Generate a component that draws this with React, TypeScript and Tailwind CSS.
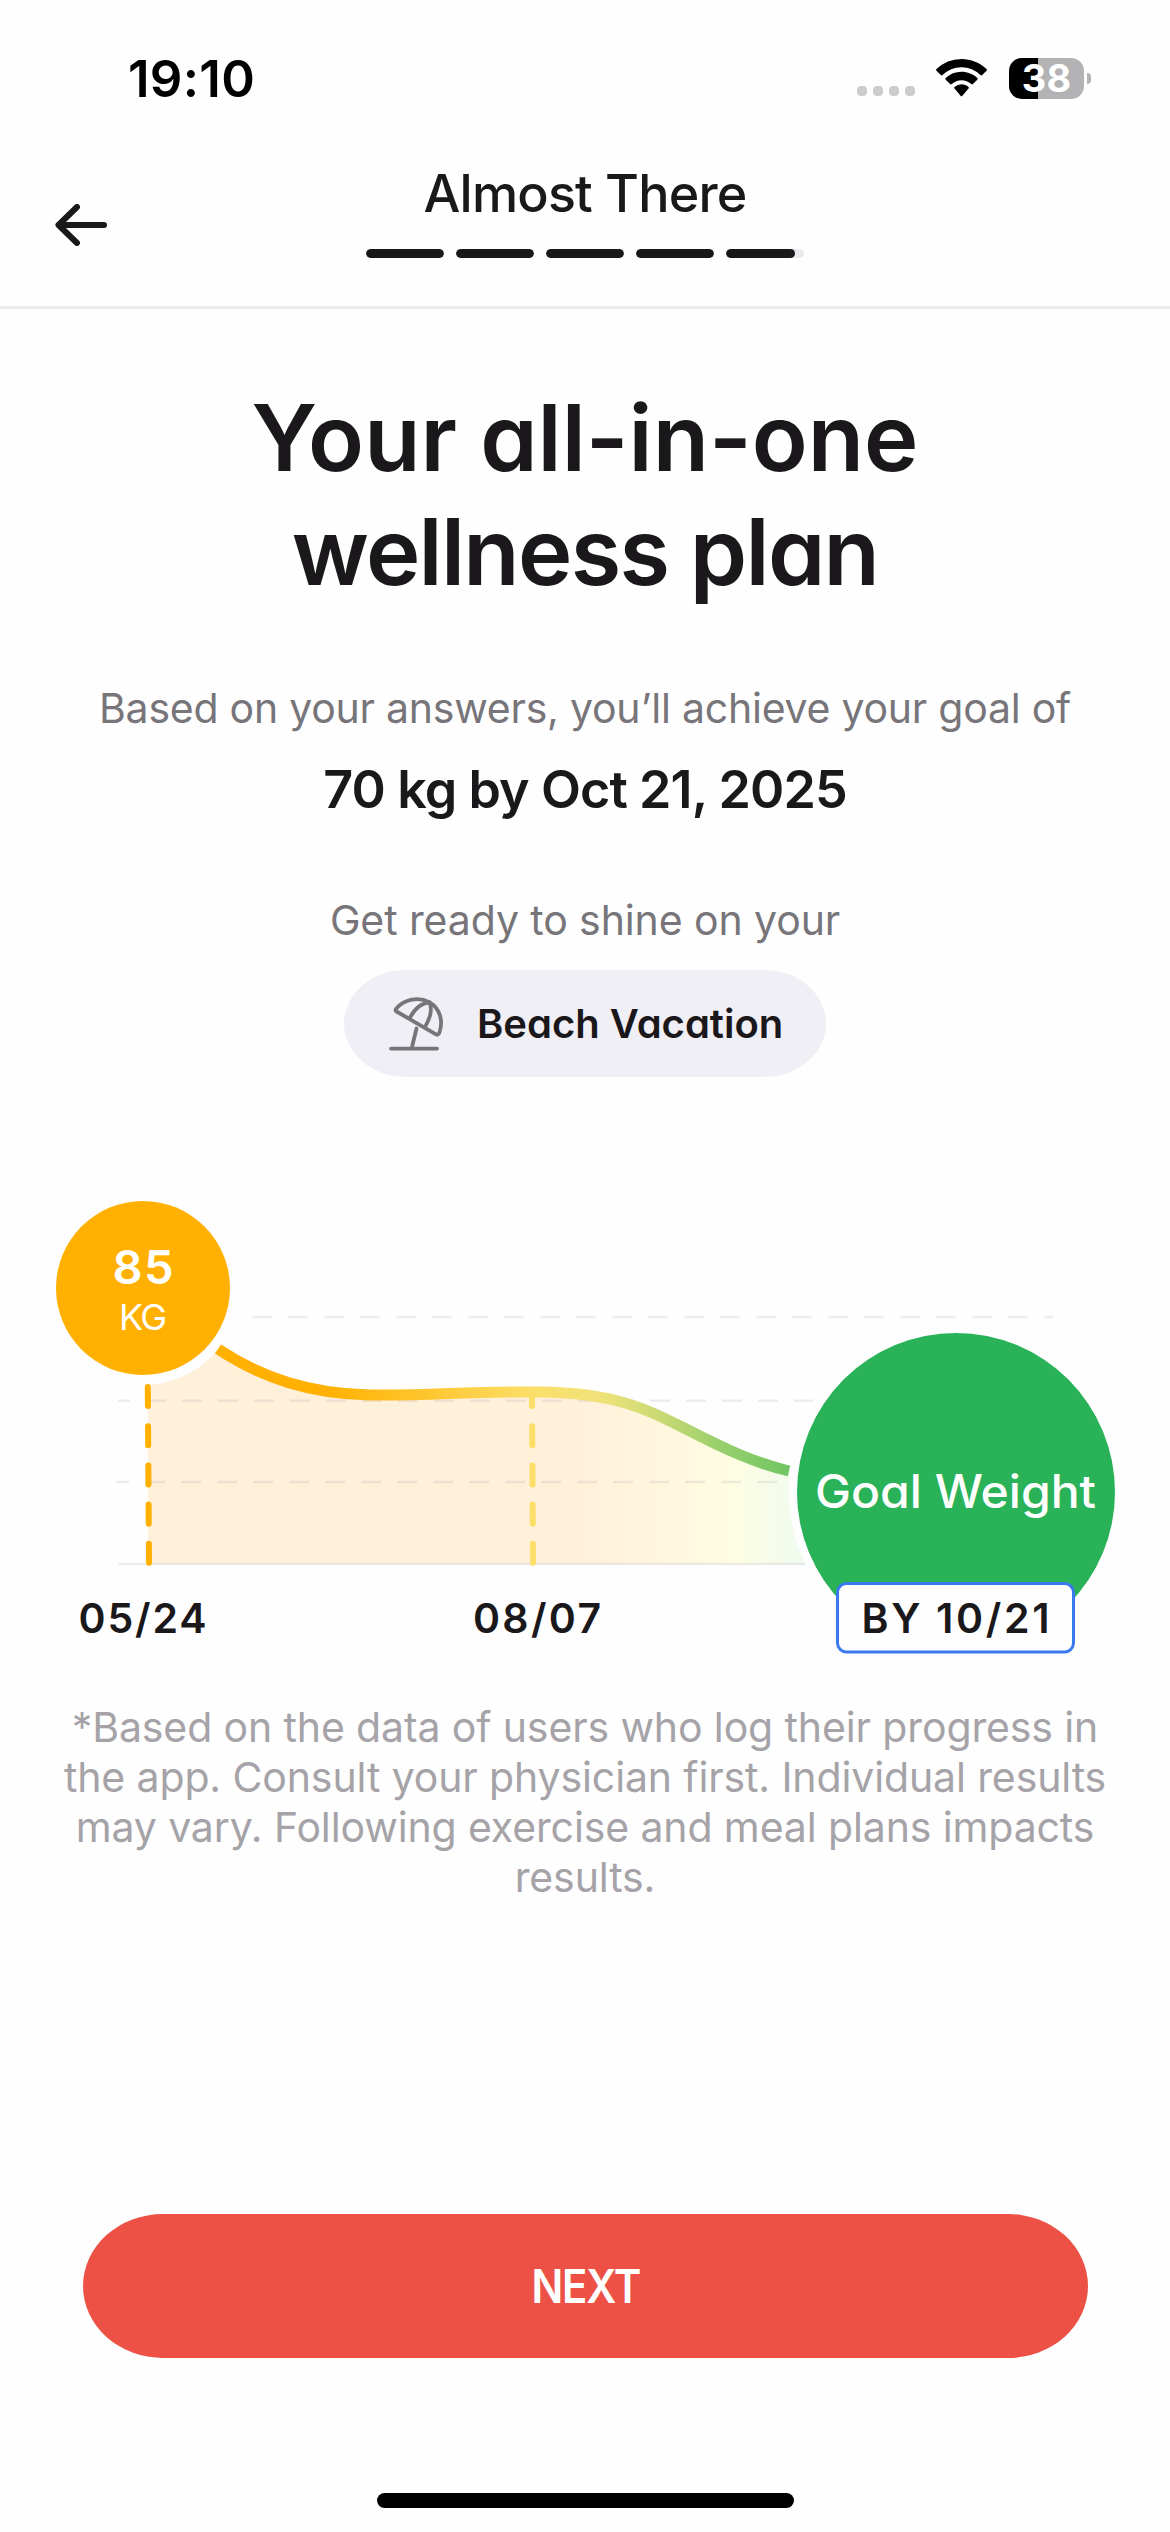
import type { ReactNode } from 'react'

const PROGRESS_STEPS = [100, 100, 100, 100, 89]

const FOOTNOTE_LINES = [
  '*Based on the data of users who log their progress in',
  'the app. Consult your physician first. Individual results',
  'may vary. Following exercise and meal plans impacts',
  'results.',
]

export default function App() {
  return (
    <main className="flex h-[2532px] w-[1170px] flex-col overflow-hidden bg-[#fefefe] font-['Inter',sans-serif] text-[#1a181b]">
      <StatusBar />
      <Header />
      <PlanSummary />
      <WeightChart />
      <Footnote />
      <button
        type="button"
        className="mr-[82px] ml-[83px] mt-[312px] h-36 shrink-0 rounded-[80px/72px] bg-[#ed5145] text-[46px] font-semibold tracking-[-1.2px] text-white"
      >
        <span className="inline-block scale-x-[0.91]">NEXT</span>
      </button>
      <div className="mx-auto mt-[135px] h-[15px] w-[417px] shrink-0 rounded-full bg-black" />
    </main>
  )
}

function StatusBar() {
  return (
    <div className="flex h-[156px] shrink-0 items-center justify-between pr-[79px] pl-[128px] text-black">
      <span className="text-[51px] leading-none font-semibold tracking-[0.3px]">
        19:10
      </span>
      <div className="flex items-center">
        <div className="mt-[26px] mr-[21px] flex gap-1.5">
          {[0, 1, 2, 3].map((dot) => (
            <span key={dot} className="size-2.5 rounded-[4px] bg-[#cdcbce]" />
          ))}
        </div>
        <WifiIcon />
        <div className="ml-[22px] flex h-[41px] w-[75px] items-center justify-center rounded-[13px] bg-[linear-gradient(to_right,#000_29px,#b3b2b4_29px)]">
          <span className="text-[38px] leading-none font-bold text-white">
            38
          </span>
        </div>
        <span className="ml-[3px] h-[11px] w-1 rounded-r-full bg-[#b3b2b4]" />
      </div>
    </div>
  )
}

function WifiIcon() {
  return (
    <svg viewBox="0 0 51 38" className="h-[38px] w-[51px]" fill="currentColor">
      <path d="M25.500 0C35 0 43.900 3.700 50.500 10.100a1.200 1.200 0 0 1 0 1.700l-4.300 4.300a1.200 1.200 0 0 1-1.700 0A27.600 27.600 0 0 0 25.500 8.200 27.600 27.600 0 0 0 6.500 16.100a1.200 1.200 0 0 1-1.700 0L.5 11.800a1.200 1.200 0 0 1 0-1.700A36 36 0 0 1 25.500 0Z" />
      <path d="M25.500 12.800c6 0 11.600 2.300 15.800 6.200.5.500.5 1.200 0 1.700l-4.400 4.400a1.200 1.200 0 0 1-1.700 0 14.300 14.300 0 0 0-19.400 0 1.200 1.200 0 0 1-1.700 0l-4.400-4.400a1.200 1.200 0 0 1 0-1.700 23.200 23.200 0 0 1 15.800-6.200Z" />
      <path d="M25.500 25.300c2.700 0 5.100 1 7 2.600.5.500.5 1.200 0 1.700l-6.100 7.200a1.200 1.200 0 0 1-1.800 0l-6.100-7.200a1.200 1.200 0 0 1 0-1.700 10.700 10.700 0 0 1 7-2.600Z" />
    </svg>
  )
}

function Header() {
  return (
    <header className="grid h-[153px] shrink-0 grid-cols-[1fr_438px_1fr] border-b-[3px] border-[#ebe9ed]">
      <svg
        viewBox="0 0 52 42"
        className="mt-12 ml-[55px] h-[42px] w-[52px]"
        fill="none"
        stroke="currentColor"
        strokeWidth="6"
        strokeLinecap="round"
        strokeLinejoin="round"
      >
        <path d="M22 3 3.500 21 22 39M4 21h45" />
      </svg>
      <div className="pt-3 text-center">
        <Display className="text-[52px] leading-[52px] font-medium tracking-[-0.8px]">
          Almost There
        </Display>
        <div className="mt-[29px] flex gap-3">
          {PROGRESS_STEPS.map((value, index) => (
            <div
              key={index}
              className="h-[9px] w-[78px] overflow-hidden rounded-full bg-[#ebe9ed]"
            >
              <div
                className="h-full rounded-full bg-[#1a181b]"
                style={{ width: `${value}%` }}
              />
            </div>
          ))}
        </div>
      </div>
    </header>
  )
}

function PlanSummary() {
  return (
    <section className="flex flex-col items-center pt-[72px] text-center whitespace-nowrap">
      <h1>
        <Display className="text-[92px] leading-[114px] font-semibold">
          Your all-in-one
        </Display>
        <Display className="text-[92px] leading-[114px] font-semibold tracking-[-1.7px]">
          wellness plan
        </Display>
      </h1>
      <p className="mt-[74px] text-[41px] leading-[50px] tracking-[-0.24px] text-[#77757a]">
        Based on your answers, you’ll achieve your goal of
      </p>
      <Display className="mt-[27px] text-[52px] leading-[60px] font-semibold tracking-[-0.9px]">
        70 kg by Oct 21, 2025
      </Display>
      <p className="mt-[75px] text-[41px] leading-[50px] tracking-[-0.1px] text-[#77757a]">
        Get ready to shine on your
      </p>
      <div className="mt-[25px] flex h-[107px] w-[482px] items-center rounded-[62px/54px] bg-[#f1eff6] pl-11">
        <BeachIcon />
        <Display className="ml-[31px] text-[40px] leading-none font-semibold">
          Beach Vacation
        </Display>
      </div>
    </section>
  )
}

function BeachIcon() {
  return (
    <svg
      viewBox="58 46 58 56"
      className="h-14 w-[58px]"
      fill="none"
      stroke="#77757a"
      strokeWidth="3.800"
      strokeLinecap="round"
      strokeLinejoin="round"
    >
      <path d="M66.500 61.500 106 84.300c1.500.8 2.600.3 3.200-1.200 4.500-12 .8-24.600-9.600-30.800-11.500-6.200-25.500-3-33.500 6.500-.9 1.100-.8 2 .4 2.700Z" />
      <path d="M80 67.500c4.500-8.500 11.500-14.500 19.500-15.200M95.500 76c5-8.500 6.500-17.500 4-23.700" />
      <path d="M86.500 78.500 82 97M61 98.600h46" />
    </svg>
  )
}

function WeightChart() {
  return (
    <svg
      viewBox="0 1180 1170 484"
      className="mt-[103px] h-[484px] w-[1170px] shrink-0"
      fill="none"
    >
      <defs>
        <linearGradient id="line" gradientUnits="userSpaceOnUse" x1="218" x2="790" y1="0" y2="0">
          <stop offset="0.18" stopColor="#ffb000" />
          <stop offset="0.38" stopColor="#fec832" />
          <stop offset="0.55" stopColor="#fbdf6a" />
          <stop offset="0.67" stopColor="#f0e27a" />
          <stop offset="0.78" stopColor="#c6d974" />
          <stop offset="0.88" stopColor="#97cf6c" />
          <stop offset="1" stopColor="#70c564" />
        </linearGradient>
        <linearGradient id="area" gradientUnits="userSpaceOnUse" x1="148" x2="800" y1="0" y2="0">
          <stop offset="0.66" stopColor="#fff0da" />
          <stop offset="0.8" stopColor="#fff7de" />
          <stop offset="0.9" stopColor="#fdfde2" />
          <stop offset="1" stopColor="#f1fbee" />
        </linearGradient>
      </defs>

      <path
        d="M148 1384V1564H808V1472H789C755 1463 725 1449 690 1431C650 1411 620 1393 540 1392C470 1391 430 1396 370 1395C310 1394 262 1378 218 1349L143 1288Z"
        fill="url(#area)"
      />

      {/* grid */}
      <g stroke="#7a6a90" strokeOpacity="0.12" strokeWidth="2.500">
        <path d="M118 1400.700H813" strokeDasharray="20 16" strokeDashoffset="8" />
        <path d="M116 1482H790" strokeDasharray="20 16" strokeDashoffset="7" />
        <path d="M118 1564H810" />
      </g>
      <path d="M252 1317H1053" stroke="#efedf2" strokeWidth="2.500" strokeDasharray="20 16" />

      {/* white rings that separate the curve from both bubbles */}
      <circle cx="143" cy="1288" r="97" fill="#fefefe" />
      <circle cx="956" cy="1492" r="167" fill="#fefefe" />

      <g strokeWidth="6" strokeLinecap="round" strokeDasharray="19 20.200">
        <path d="M147.800 1387 149 1563" stroke="#ffb000" />
        <path d="M532 1394 533 1563" stroke="#fcdf68" strokeDashoffset="7" />
      </g>
      <path
        d="M218 1349C262 1378 310 1394 370 1395C430 1396 470 1391 540 1392C620 1393 650 1411 690 1431C725 1449 755 1463 789 1471"
        stroke="url(#line)"
        strokeWidth="11"
      />

      <circle cx="143" cy="1288" r="87" fill="#ffb000" />
      <circle cx="956" cy="1492" r="159" fill="#2ab259" />

      <g textAnchor="middle" fill="#fff">
        <text x="143" y="1284" className="text-[47px] font-semibold" textLength="61">
          85
        </text>
        <text x="143" y="1330" className="text-[36px]" textLength="48">
          KG
        </text>
        <text
          x="955.500"
          y="1507.500"
          className="text-[46px] font-medium [font-feature-settings:'cv11']"
          textLength="281"
          lengthAdjust="spacingAndGlyphs"
        >
          Goal Weight
        </text>
      </g>

      <rect x="837.500" y="1583.500" width="236" height="68.500" rx="9" fill="#fefefe" stroke="#3b79ee" strokeWidth="3" />
      <g textAnchor="middle" fill="#1a181b" className="text-[41px] font-semibold">
        <text x="142.500" y="1633" textLength="128">
          05/24
        </text>
        <text x="537" y="1633" textLength="128">
          08/07
        </text>
        <text x="955.500" y="1633" textLength="188">
          BY 10/21
        </text>
      </g>
    </svg>
  )
}

function Footnote() {
  return (
    <p className="mt-[38px] shrink-0 text-center text-[41px] leading-[50px] tracking-[-0.12px] whitespace-nowrap text-[#a5a3a7]">
      {FOOTNOTE_LINES.map((line) => (
        <span key={line} className="block">
          {line}
        </span>
      ))}
    </p>
  )
}

type DisplayProps = {
  className: string
  children: ReactNode
}

// Geometric display text, with Inter's single-storey "a".
function Display({ className, children }: DisplayProps) {
  return (
    <span className={`block [font-feature-settings:'cv11'] ${className}`}>
      {children}
    </span>
  )
}
